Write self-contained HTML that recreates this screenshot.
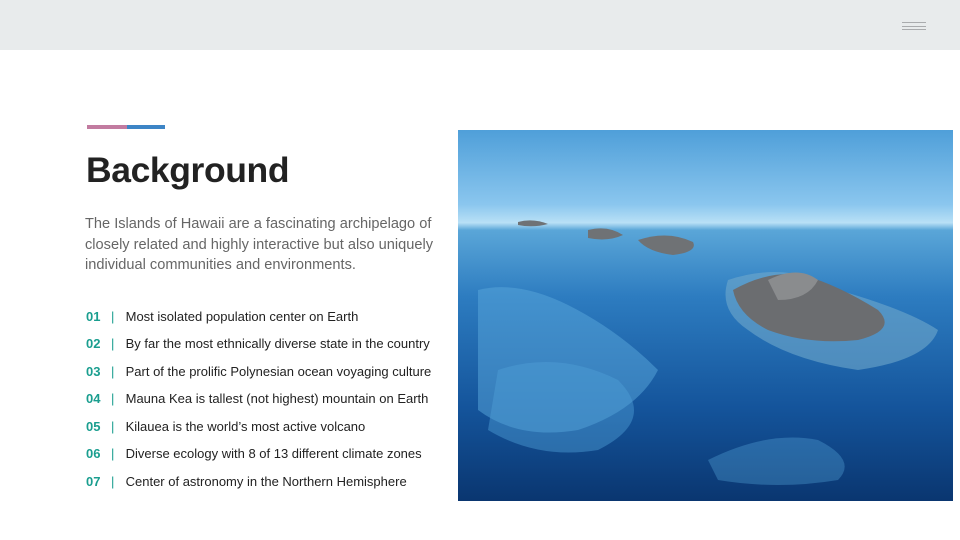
<!DOCTYPE html>
<html><head><style>
body{margin:0;width:960px;height:540px;background:#fff;position:relative;overflow:hidden;font-family:"Liberation Sans",sans-serif}
.top{position:absolute;left:0;top:0;width:960px;height:50px;background:#e8ebec}
.hb{position:absolute;left:902px;width:24px;height:1px;background:#a9abad}
.bar1{position:absolute;left:87px;top:125px;width:40px;height:4px;background:#c27ba0}
.bar2{position:absolute;left:127px;top:125px;width:38px;height:4px;background:#3d85c6}
h1{position:absolute;left:86px;top:150px;margin:0;font-size:35.5px;font-weight:bold;color:#222;letter-spacing:-0.4px}
.p{position:absolute;left:85px;top:214px;width:360px;font-size:14.6px;line-height:20.5px;color:#666}
.li{position:absolute;left:86px;font-size:13px;color:#222;white-space:nowrap}
.li b{color:#1a9e8f;font-weight:bold;display:inline-block;width:25px}
.li i{color:#1a9e8f;font-style:normal;display:inline-block;width:11px}
.img{position:absolute;left:458px;top:130px;width:495px;height:371px;overflow:hidden;background:linear-gradient(#4f9fd9 0%,#8ac6ee 20%,#b9e0f6 25%,#5aa6d8 27%,#2d7cc0 45%,#14549b 75%,#0a3670 100%)}
</style></head><body>
<div class="top"></div>
<div class="hb" style="top:22px"></div><div class="hb" style="top:26px"></div><div class="hb" style="top:29px"></div>
<div class="bar1"></div><div class="bar2"></div>
<h1>Background</h1>
<div class="p">The Islands of Hawaii are a fascinating archipelago of closely related and highly interactive but also uniquely individual communities and environments.</div>
<div class="li" style="top:309px"><b>01</b><i>|</i> Most isolated population center on Earth</div>
<div class="li" style="top:336px"><b>02</b><i>|</i> By far the most ethnically diverse state in the country</div>
<div class="li" style="top:364px"><b>03</b><i>|</i> Part of the prolific Polynesian ocean voyaging culture</div>
<div class="li" style="top:391px"><b>04</b><i>|</i> Mauna Kea is tallest (not highest) mountain on Earth</div>
<div class="li" style="top:419px"><b>05</b><i>|</i> Kilauea is the world’s most active volcano</div>
<div class="li" style="top:446px"><b>06</b><i>|</i> Diverse ecology with 8 of 13 different climate zones</div>
<div class="li" style="top:474px"><b>07</b><i>|</i> Center of astronomy in the Northern Hemisphere</div>
<div class="img">
<svg width="495" height="371">
<path d="M20 160 Q60 150 110 175 Q160 200 200 240 Q180 280 120 300 Q60 310 20 280 Z" fill="#5aa8dc" opacity=".5"/>
<path d="M40 240 Q100 220 160 250 Q200 290 140 320 Q80 330 30 300Z" fill="#4f9fd6" opacity=".45"/>
<path d="M270 150 Q330 130 380 160 Q450 180 480 200 Q470 230 400 240 Q330 230 290 200 Q260 180 270 150Z" fill="#6fa8cc" opacity=".6"/>
<path d="M275 160 Q310 140 345 145 Q380 155 420 180 Q440 200 400 210 Q350 215 310 200 Q280 185 275 160Z" fill="#6b6d70"/>
<path d="M310 150 Q340 135 360 150 Q350 170 320 170Z" fill="#8a8c8e"/>
<path d="M180 110 Q210 100 235 112 Q240 122 215 125 Q190 122 180 110Z" fill="#6f7275"/>
<path d="M130 100 Q150 95 165 105 Q150 112 130 108Z" fill="#6f7275"/>
<path d="M60 92 Q75 88 90 94 Q75 98 60 95Z" fill="#6f7275"/>
<path d="M250 330 Q310 300 360 310 Q400 330 380 350 Q320 360 260 350Z" fill="#5aa8dc" opacity=".35"/>
</svg>
</div>
</body></html>
